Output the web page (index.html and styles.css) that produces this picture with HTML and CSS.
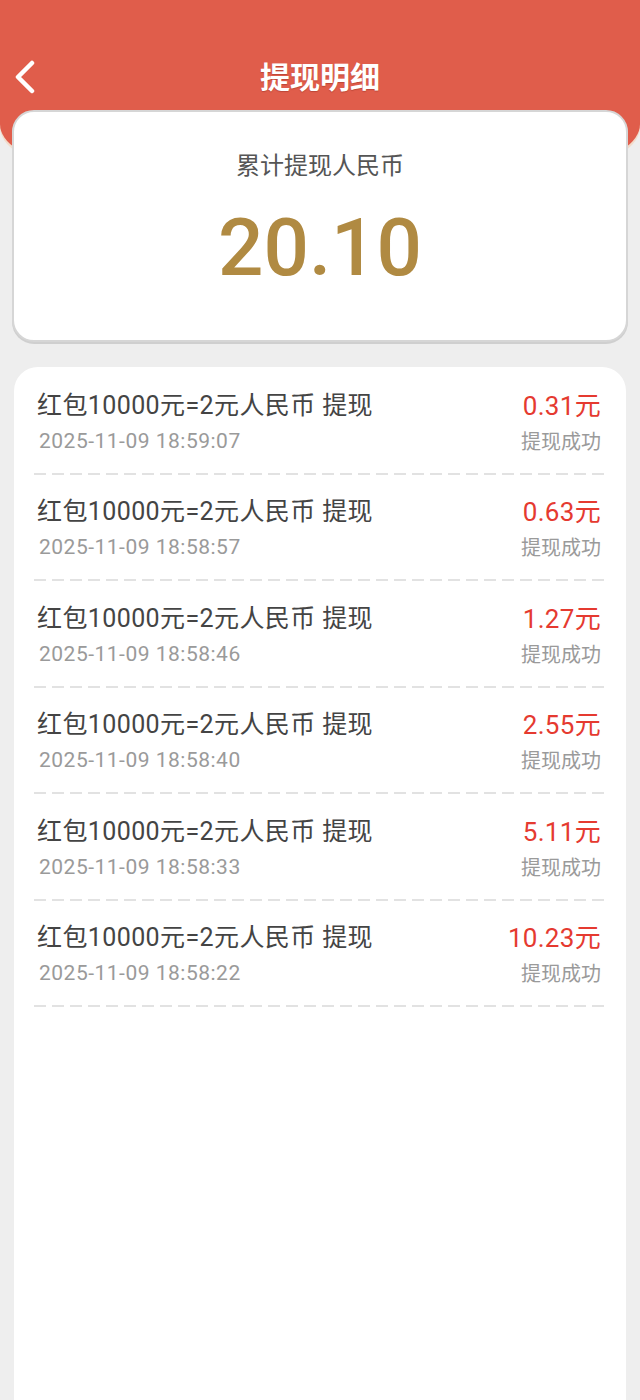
FILE: index.html
```html
<!DOCTYPE html>
<html lang="zh-CN">
<head>
<meta charset="utf-8">
<title>提现明细</title>
<link rel="stylesheet" href="styles.css">
</head>
<body>
<header class="topbar">
  <div class="nav">
    <svg class="back" width="24" height="34" viewBox="0 0 24 34"><polyline points="19,3 5,17 19,31" fill="none" stroke="#fff" stroke-width="4.5" stroke-linecap="round" stroke-linejoin="round"/></svg>
    <h1 class="title">提现明细</h1>
  </div>
</header>
<section class="summary">
  <div class="summary-label">累计提现人民币</div>
  <div class="summary-value">20.10</div>
</section>
<section class="list">
  <div class="row">
    <div class="left"><div class="name">红包10000元=2元人民币 提现</div><div class="time">2025-11-09 18:59:07</div></div>
    <div class="right"><div class="amount">0.31元</div><div class="status">提现成功</div></div>
  </div>
  <div class="row">
    <div class="left"><div class="name">红包10000元=2元人民币 提现</div><div class="time">2025-11-09 18:58:57</div></div>
    <div class="right"><div class="amount">0.63元</div><div class="status">提现成功</div></div>
  </div>
  <div class="row">
    <div class="left"><div class="name">红包10000元=2元人民币 提现</div><div class="time">2025-11-09 18:58:46</div></div>
    <div class="right"><div class="amount">1.27元</div><div class="status">提现成功</div></div>
  </div>
  <div class="row">
    <div class="left"><div class="name">红包10000元=2元人民币 提现</div><div class="time">2025-11-09 18:58:40</div></div>
    <div class="right"><div class="amount">2.55元</div><div class="status">提现成功</div></div>
  </div>
  <div class="row">
    <div class="left"><div class="name">红包10000元=2元人民币 提现</div><div class="time">2025-11-09 18:58:33</div></div>
    <div class="right"><div class="amount">5.11元</div><div class="status">提现成功</div></div>
  </div>
  <div class="row">
    <div class="left"><div class="name">红包10000元=2元人民币 提现</div><div class="time">2025-11-09 18:58:22</div></div>
    <div class="right"><div class="amount">10.23元</div><div class="status">提现成功</div></div>
  </div>
</section>
</body>
</html>
```
FILE: styles.css
```css
* { box-sizing: border-box; }
html, body { margin: 0; padding: 0; }
body {
  background: #eeeeee;
  font-family: Roboto, "Noto Sans CJK SC", sans-serif;
  width: 640px;
  height: 1400px;
  overflow: hidden;
}
.topbar {
  height: 160px;
  background: #e05d4b;
  border-bottom-left-radius: 60px 36px;
  border-bottom-right-radius: 60px 36px;
  box-shadow: 0 3px 0 #f2dccb;
}
.nav {
  position: relative;
  height: 150px;
  padding-top: 55px;
  text-align: center;
}
.back {
  position: absolute;
  left: 13px;
  top: 60px;
}
.title {
  margin: 0;
  font-family: "Noto Sans CJK SC", sans-serif;
  font-size: 30px;
  font-weight: 700;
  line-height: 40px;
  color: #ffffff;
  text-shadow: 0 1px 1px rgba(120, 30, 20, 0.35);
}
.summary {
  margin: -50px 12px 0;
  height: 232px;
  background: #ffffff;
  border: 2px solid #d6d6d6;
  border-radius: 22px;
  box-shadow: 0 2px 0 #cfcfcf;
  text-align: center;
  padding-top: 36px;
}
.summary-label {
  font-family: "Noto Sans CJK SC", sans-serif;
  font-size: 24px;
  line-height: 32px;
  color: #555555;
}
.summary-value {
  margin-top: 20px;
  font-family: Roboto, sans-serif;
  font-size: 80px;
  font-weight: 500;
  line-height: 96px;
  color: #b08a42;
}
.list {
  margin: 25px 14px 0;
  background: #ffffff;
  border-radius: 24px 24px 0 0;
  padding: 1px 20px 0;
  height: 1100px;
}
.row {
  display: flex;
  justify-content: space-between;
  padding: 22.5px 5px 0 3px;
  background-image: repeating-linear-gradient(90deg, #e2e2e2 0 12px, transparent 12px 18px);
  background-size: 100% 2px;
  background-position: left bottom;
  background-repeat: no-repeat;
  height: 106.5px;
}
.name {
  font-family: Roboto, "Noto Sans CJK SC", sans-serif;
  font-size: 25px;
  letter-spacing: 0.4px;
  line-height: 30px;
  color: #444444;
}
.time {
  margin-top: 5px;
  font-size: 21px;
  letter-spacing: 0.5px;
  line-height: 30px;
  color: #9a9a9a;
  padding-left: 2px;
}
.right { text-align: right; }
.amount {
  font-size: 26px;
  letter-spacing: 0.3px;
  line-height: 30px;
  color: #e53a30;
}
.status {
  margin-top: 5px;
  font-family: "Noto Sans CJK SC", sans-serif;
  font-size: 20px;
  line-height: 30px;
  color: #9a9a9a;
}
```
